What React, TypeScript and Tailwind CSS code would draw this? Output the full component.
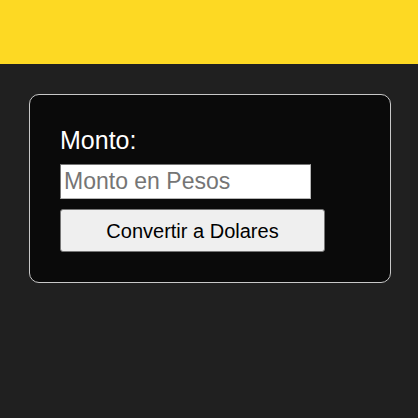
import React, { useState } from "react";

const App: React.FC = () => {
  const [monto, setMonto] = useState("");

  return (
    <div className="min-h-[418px] bg-[#202020] font-['Liberation_Sans',Arial,sans-serif]">
      {/* Header bar */}
      <header className="h-[64px] bg-[#fdd923]"></header>

      <main className="pt-[30px] px-[29px]">
        <div className="w-[362px] rounded-[10px] border border-[#c8c8c8] bg-[#0a0a0a] px-[30px] pt-[31px] pb-[30px]">
          <label className="block text-[25px] leading-[28px] text-white">Monto:</label>
          <input
            type="text"
            value={monto}
            onChange={(e) => setMonto(e.target.value)}
            placeholder="Monto en Pesos"
            className="mt-[10px] block h-[35px] w-[251px] border border-t-[#767676] border-l-[#767676] border-b-[#b5b5b5] border-r-[#b5b5b5] bg-white px-[3px] text-[23px] text-black placeholder:text-[#757575] outline-none"
          />
          <button className="mt-[10px] block h-[43px] w-[265px] rounded-[3px] border border-[#767676] bg-[#efefef] text-[20px] text-black">
            Convertir a Dolares
          </button>
        </div>
      </main>
    </div>
  );
};

export default App;
